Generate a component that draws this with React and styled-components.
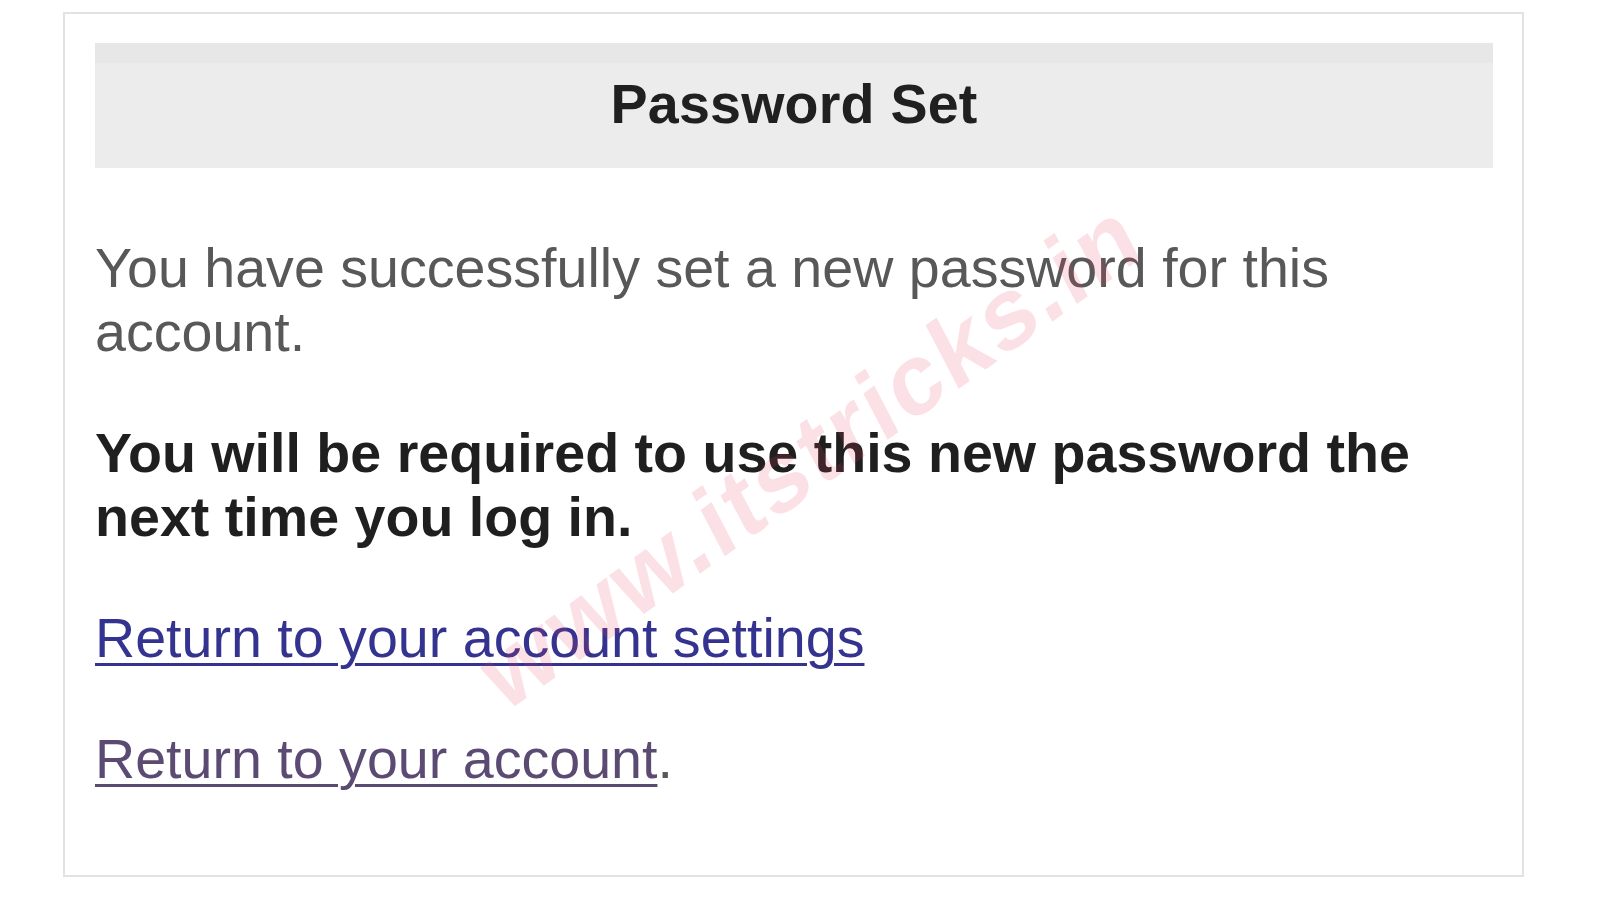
import React from 'react'
import styled, {createGlobalStyle} from 'styled-components'

const GlobalStyle = createGlobalStyle`
  html, body {
    margin: 0;
    padding: 0;
    background: #ffffff;
  }
  body {
    font-family: "Liberation Sans", Arial, sans-serif;
  }
`

const Page = styled.div`
  width: 1600px;
  height: 900px;
  padding: 12px 0 0 63px;
  box-sizing: border-box;
  overflow: hidden;
`

const Card = styled.div`
  position: relative;
  width: 1461px;
  height: 865px;
  box-sizing: border-box;
  border: 2px solid #e2e2e2;
  background: #fff;
  padding: 29px 29px 0 30px;
  overflow: hidden;
`

const Header = styled.div`
  height: 125px;
  display: flex;
  align-items: center;
  justify-content: center;
  background: linear-gradient(#e7e7e7 0, #e7e7e7 20px, #ececec 20px);
  box-sizing: border-box;
  padding-bottom: 4px;

  h1 {
    margin: 0;
    font-size: 55.6px;
    font-weight: bold;
    color: #202020;
    letter-spacing: 0.2px;
  }
`

const Body = styled.div`
  padding-top: 68px;
`

const Para = styled.p`
  margin: 0 0 57px;
  font-size: 55.6px;
  line-height: 64px;
  color: ${props => props.strong ? '#1f1f1f' : '#585858'};
  font-weight: ${props => props.strong ? 'bold' : 'normal'};
  max-width: 1340px;
`

const Link = styled.a`
  color: ${props => props.visited ? '#5b4a72' : '#343490'};
  text-decoration: underline;
  text-decoration-thickness: 3px;
  text-underline-offset: 6px;
`

const Watermark = styled.div`
  position: absolute;
  left: 745px;
  top: 440px;
  transform: translate(-50%, -50%) rotate(-35.6deg) skewX(-8deg);
  font-size: 98px;
  font-weight: bold;
  letter-spacing: 3px;
  white-space: nowrap;
  color: rgba(228, 70, 95, 0.16);
  pointer-events: none;
`

const App = () => {
  return (
    <>
      <GlobalStyle />
      <Page>
        <Card>
          <Header>
            <h1>Password Set</h1>
          </Header>
          <Body>
            <Para>You have successfully set a new password for this account.</Para>
            <Para strong>You will be required to use this new password the next time you log in.</Para>
            <Para>
              <Link href="#">Return to your account settings</Link>
            </Para>
            <Para>
              <Link href="#" visited>Return to your account</Link>.
            </Para>
          </Body>
          <Watermark>www.itstricks.in</Watermark>
        </Card>
      </Page>
    </>
  )
}

export default App
